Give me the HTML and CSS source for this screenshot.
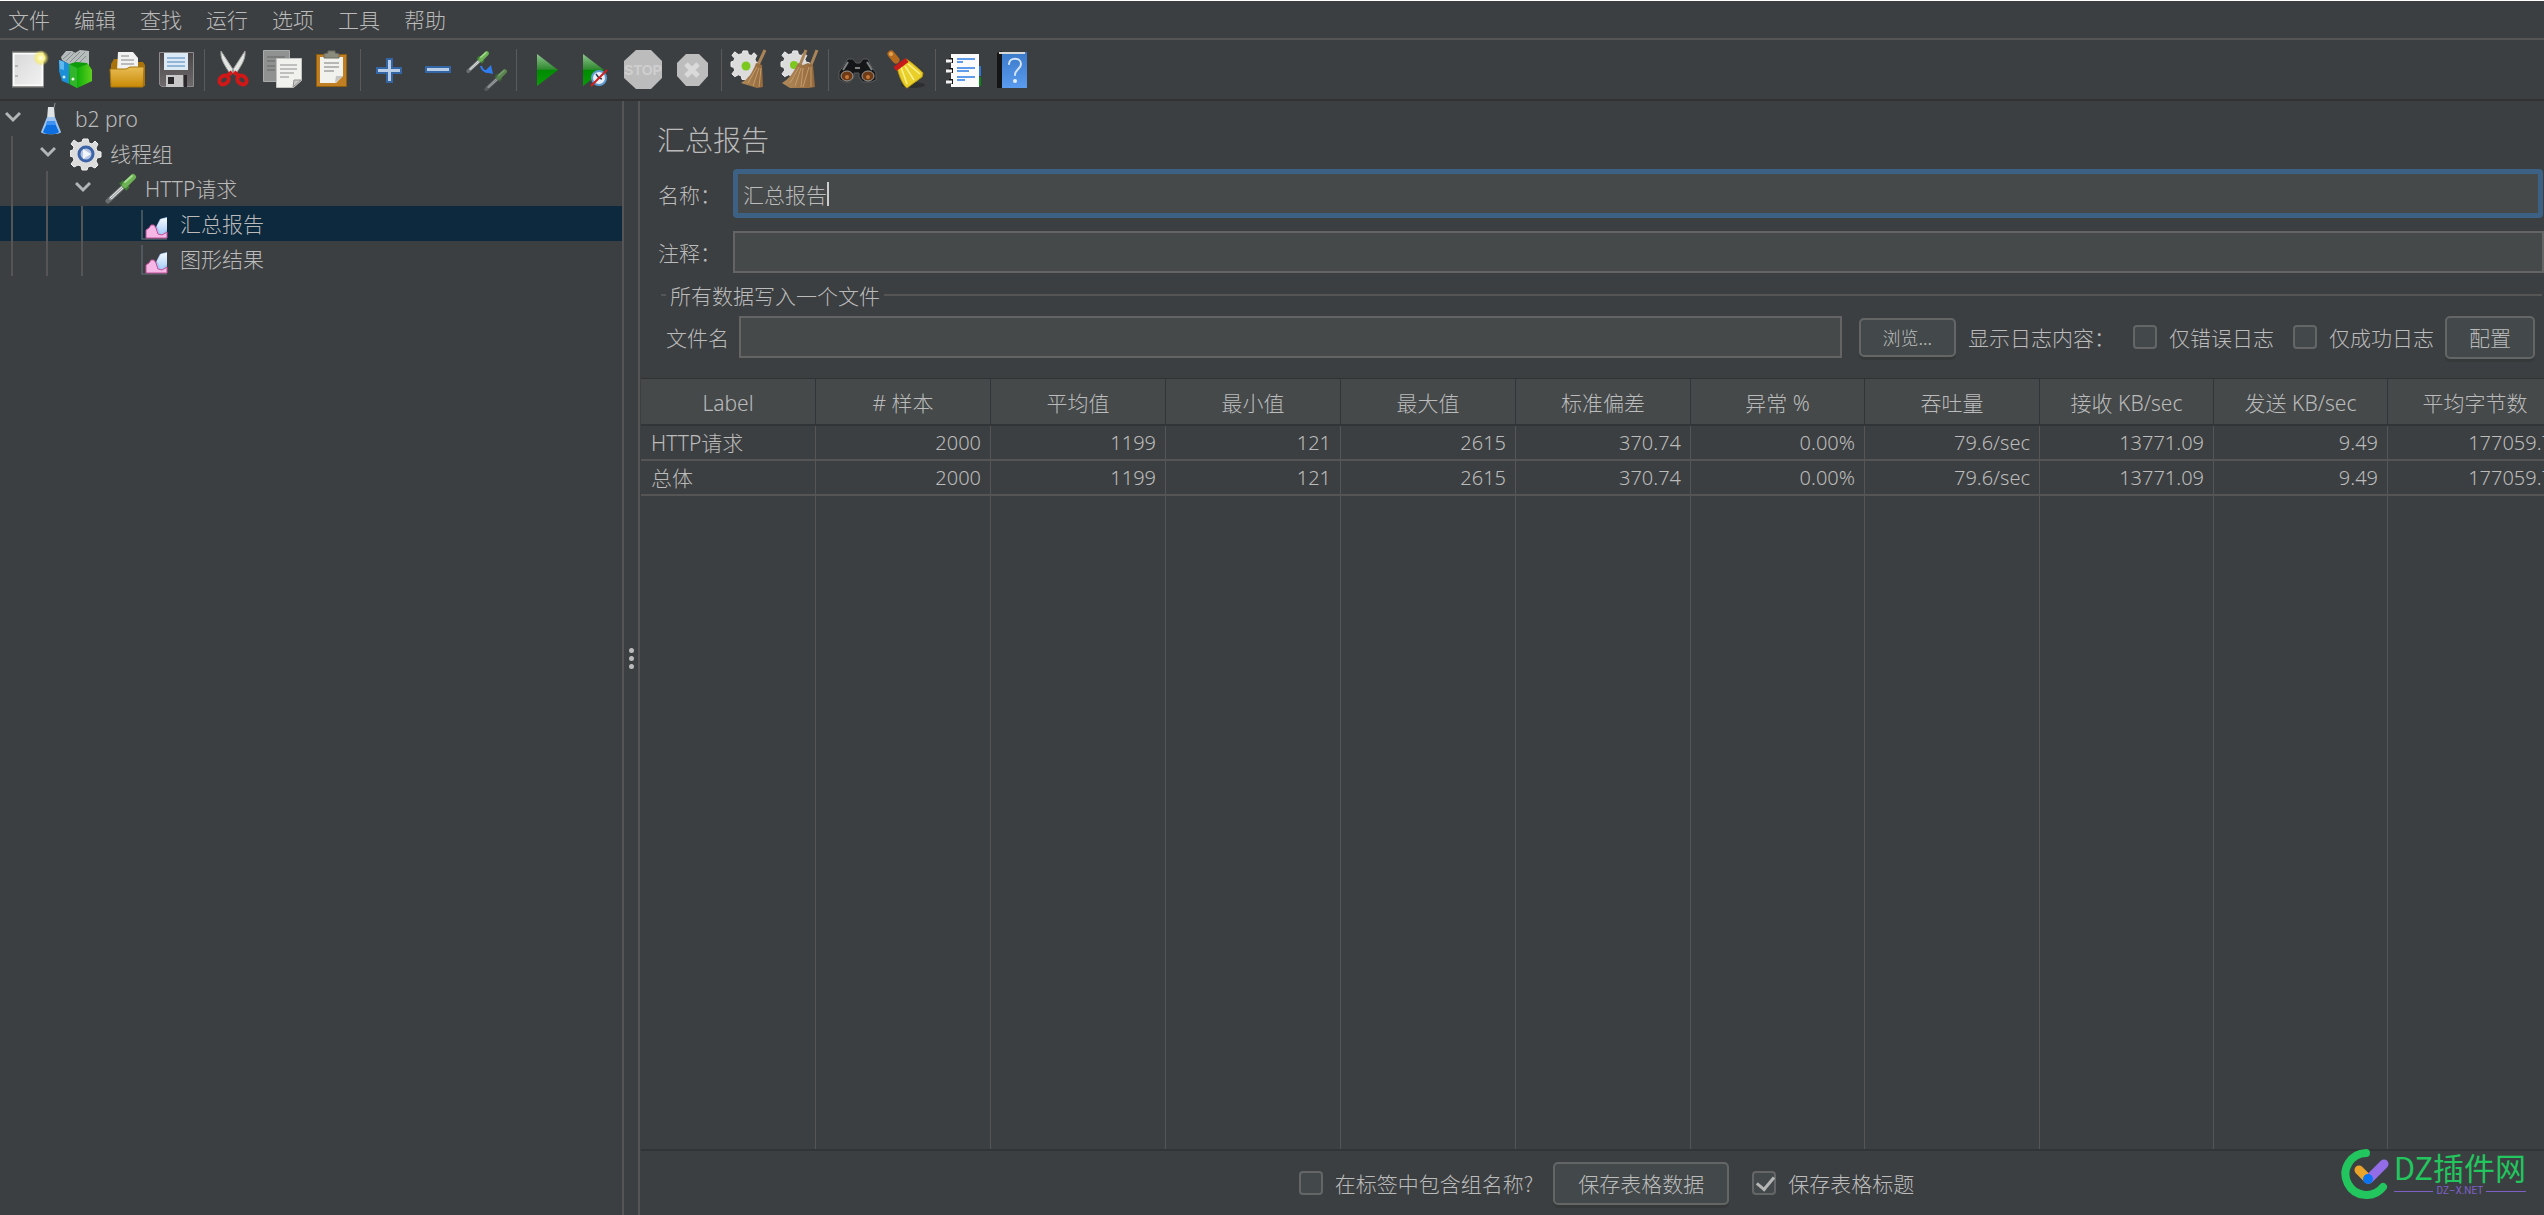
FILE: index.html
```html
<!DOCTYPE html>
<html lang="zh-CN">
<head>
<meta charset="utf-8">
<title>b2 pro</title>
<link rel="stylesheet" href="styles.css">
</head>
<body>
<svg class="defs" aria-hidden="true">
  <defs>
    <linearGradient id="gPage" x1="0" y1="0" x2="1" y2="1"><stop offset="0" stop-color="#d8d8d8"/><stop offset="1" stop-color="#f2f2f2"/></linearGradient>
    <linearGradient id="gFolder" x1="0" y1="0" x2="0" y2="1"><stop offset="0" stop-color="#e8bd55"/><stop offset="1" stop-color="#c98a06"/></linearGradient>
    <linearGradient id="gGreen" x1="0" y1="0" x2="0" y2="1"><stop offset="0" stop-color="#8fc48f"/><stop offset=".48" stop-color="#2f8a2f"/><stop offset=".5" stop-color="#008a00"/><stop offset="1" stop-color="#0a9c0a"/></linearGradient>
    <linearGradient id="gBook" x1="0" y1="0" x2="1" y2="0"><stop offset="0" stop-color="#0fae0a"/><stop offset="1" stop-color="#5fcf1e"/></linearGradient>
    <linearGradient id="gDisk" x1="0" y1="0" x2="0" y2="1"><stop offset="0" stop-color="#4a4648"/><stop offset="1" stop-color="#6e6a6c"/></linearGradient>
    <linearGradient id="gStraw" x1="0" y1="0" x2="1" y2="0"><stop offset="0" stop-color="#b08a5c"/><stop offset="1" stop-color="#94683a"/></linearGradient>
    <radialGradient id="gSun"><stop offset="0" stop-color="#fffef0"/><stop offset=".45" stop-color="#fbf38c"/><stop offset="1" stop-color="#f0e03c" stop-opacity="0"/></radialGradient>
    <linearGradient id="gHelp" x1="0" y1="0" x2="0" y2="1"><stop offset="0" stop-color="#3b78c8"/><stop offset="1" stop-color="#5a9cf0"/></linearGradient>
    <linearGradient id="gSky" x1="0" y1="0" x2="0" y2="1"><stop offset="0" stop-color="#f4f9ff"/><stop offset="1" stop-color="#a9cdf8"/></linearGradient>
    <g id="gear">
      <path fill="#dcdcdc" stroke="#f2f2f2" stroke-width="1" d="M13 1h5l1 4 3 1 3-3 3 3-2 4 1 3 4 1v5l-4 1-1 3 2 4-3 3-4-2-3 1-1 3h-5l-1-4-3-1-4 2-3-3 3-4-1-3-3-1v-5l3-1 1-3-3-3 3-4 4 3 4-1z"/>
    </g>
    <g id="dropper">
      <path fill="none" stroke="#6a6d6f" stroke-width="5" stroke-linecap="round" d="M3 30 19 15"/>
      <path fill="none" stroke="#e4e6e6" stroke-width="3" stroke-linecap="round" d="M6 27 19 15"/>
      <path fill="none" stroke="#8b9090" stroke-width="1" d="M4 29 19 15"/>
      <path fill="none" stroke="#3f7a34" stroke-width="5" d="m16 11 7 7"/>
      <path fill="none" stroke="#6db356" stroke-width="6" stroke-linecap="round" d="m20 14 8-8"/>
      <path fill="none" stroke="#a5dc90" stroke-width="2" stroke-linecap="round" d="m20 11 7-6"/>
    </g>
    <g id="chart">
      <path fill="none" stroke="#56616a" stroke-width="1.500" d="M2 0v29h25"/>
      <path fill="#a9c8f5" d="M16 17 20 9l7-2v20h-9z"/>
      <path fill="url(#gSky)" d="M17 16 21 9l6-1v11l-6 5z"/>
      <path fill="#f6b6e6" stroke="#c05096" stroke-width="1" d="M6 28v-8l3-2 2-3h3l2 3 2 6 4 1 5-3v6z"/>
    </g>
    <path id="arrow" fill="none" stroke="#b3b6b7" stroke-width="3" d="m1 3 7 7 7-7"/>
  </defs>
</svg>

<nav class="menubar">
  <button>文件</button><button>编辑</button><button>查找</button><button>运行</button><button>选项</button><button>工具</button><button>帮助</button>
</nav>

<div class="toolbar">
  <button aria-label="新建"><svg viewBox="0 0 40 40"><path fill="url(#gPage)" stroke="#fbfbfb" stroke-width="2" d="M4.500 4.500h29v32h-29z"/><path stroke="#8d8d86" fill="none" d="M3 3h31M3 38h32M6 17h3M6 27h3"/><circle cx="32" cy="9" r="8" fill="url(#gSun)"/></svg></button>
  <button aria-label="模板"><svg viewBox="0 0 40 40"><path fill="#b7bcbd" d="M3 8 8 2l6 0 3 2 5-3 9 1v14l-14 3-13-8z"/><path stroke="#848b8d" fill="none" d="m5 10 8-7m-5 9 9-9m-5 10 10-10m-6 11 11-11m-6 11 7-7"/><path fill="#1c8fd8" d="m1 11 4 1 6 3 3 21-10-4-3-10z"/><path fill="#5db8ee" d="m1 11 5 2v8l-4-1z"/><path fill="#0f9a0c" d="m11 15 7-2 11 1 5 7v11l-15 7-8-4z"/><path fill="url(#gBook)" d="m19 19 11-4 4 6v11l-15 7z"/><path fill="#32b42c" d="m11 15 8 4v20l-7-4z"/><circle cx="6" cy="28" r="1.500" fill="#c8ecff"/><circle cx="15" cy="30" r="1.500" fill="#e8ffe4"/></svg></button>
  <button aria-label="打开"><svg viewBox="0 0 40 40"><path fill="#a8730a" d="M4 15l3-5h9l2 3h18l2 3v21H4z"/><path fill="#f1f1f1" d="M11 3h15l5 6v13H10z"/><path stroke="#a9a9a9" fill="none" stroke-width="1.500" d="M14 7h8m-8 4h13m-13 4h13"/><path fill="url(#gFolder)" stroke="#a8760c" d="M3 20h16l4-2h14l-1 20H4z"/></svg></button>
  <button aria-label="保存"><svg viewBox="0 0 40 40"><path fill="url(#gDisk)" stroke="#8f8c8e" d="M3.500 3.500h34v34h-32l-2-2z"/><path fill="#dceaf6" d="M8 4h24v17H8z"/><path stroke="#7da4cc" fill="none" stroke-width="1.500" d="M11 9h18m-18 4h18m-18 4h18"/><path fill="#c9c9c9" d="M10 26h17v12H10z"/><path fill="#2a282a" d="M12 28h6v7h-6zM28 26h3v12h-3z"/></svg></button>
  <span class="sep"></span>
  <button aria-label="剪切"><svg viewBox="0 0 40 40"><path fill="#e3e5e3" stroke="#9fa29f" d="m7 2 13 20-3 4C12 18 6 11 7 2zM31 2 18 22l3 4C26 18 32 11 31 2z"/><ellipse cx="10" cy="31" rx="5" ry="4" fill="none" stroke="#d01818" stroke-width="4" transform="rotate(-40 10 31)"/><ellipse cx="28" cy="31" rx="5" ry="4" fill="none" stroke="#d01818" stroke-width="4" transform="rotate(40 28 31)"/><path stroke="#d01818" stroke-width="4" d="m13 27 5-4m7 4-5-4"/></svg></button>
  <button aria-label="复制"><svg viewBox="0 0 40 40"><path fill="#909292" stroke="#a9abab" d="M.5 1.500h26v31H.5z"/><path stroke="#737575" stroke-width="1.500" fill="none" d="M4 8h18M4 12h8m-8 5h8m-8 4h8"/><path fill="#f1f1ee" stroke="#c2c2bf" d="M13.500 9.500h25v22l-8 7h-17z"/><path stroke="#aeb0ae" stroke-width="1.500" fill="none" d="M17 16h17m-17 4h17m-17 4h14m-14 4h9"/><path fill="#c9cac7" stroke="#8f908e" d="m30 38 1-7 7 0z"/></svg></button>
  <button aria-label="粘贴"><svg viewBox="0 0 40 40"><path fill="#c07f22" stroke="#8f5c0e" d="M4.500 5.500h30v32h-30z"/><path fill="#f1f1ee" d="M8 8h23v19l-7 7H8z"/><path fill="#8b8c7c" stroke="#6c6d60" d="M12 9V5l4-1V2h7v2l4 1v4z"/><path stroke="#a2a4a2" stroke-width="1.500" fill="none" d="M12 14h15m-15 4h15m-15 4h10"/><path fill="#c4c5c2" d="m23 34 1-7h7z"/></svg></button>
  <span class="sep"></span>
  <button aria-label="展开"><svg viewBox="0 0 40 40"><path fill="#b9cde6" stroke="#3465a4" stroke-width="2" d="M17 10h5v9h9v5h-9v9h-5v-9H7v-5h10z"/></svg></button>
  <button aria-label="折叠"><svg viewBox="0 0 40 40"><path fill="#b9cde6" stroke="#3465a4" stroke-width="2" d="M7 18h24v5H7z"/></svg></button>
  <button aria-label="切换"><svg viewBox="0 0 40 40"><g transform="translate(-2 0) scale(.74)"><use href="#dropper"/></g><g transform="translate(16 18) scale(.74)" opacity=".6"><use href="#dropper"/></g><path fill="none" stroke="#2f7cf0" stroke-width="2" d="M13 17c1 5 5 6 9 6"/><path fill="#2f7cf0" d="m23 16 2 9-9-2z"/></svg></button>
  <span class="sep"></span>
  <button aria-label="启动"><svg viewBox="0 0 40 40"><path fill="url(#gGreen)" d="m11 5 21 16-21 16z"/></svg></button>
  <button aria-label="不停顿开始"><svg viewBox="0 0 40 40"><path fill="url(#gGreen)" d="m8 5 21 16L8 37z"/><circle cx="24" cy="29" r="7" fill="#e8f1fa" stroke="#5f9bd0" stroke-width="2"/><path stroke="#2c3c50" stroke-width="1.500" d="m24 29-3-4m3 4 3 1"/><path stroke="#cf1f1f" stroke-width="2" d="m16 37 16-16"/></svg></button>
  <button aria-label="停止" disabled><svg viewBox="0 0 40 40"><path fill="#bcbcbc" d="M12 1h15l11 11v17L27 40H12L0 29V12z"/><text x="19" y="26" class="stop-text">STOP</text></svg></button>
  <button aria-label="关闭" disabled><svg viewBox="0 0 40 40"><path fill="#bdbdbd" d="M13 5h13l9 9v13l-9 10H13l-9-10V14z"/><path stroke="#dadada" stroke-width="5" d="m13 15 12 12m0-12L13 27"/></svg></button>
  <span class="sep"></span>
  <button aria-label="清除"><svg viewBox="0 0 40 40"><g transform="translate(0 1) scale(.92)"><use href="#gear"/></g><circle cx="15" cy="17" r="4.500" fill="#7cc820"/><path stroke="#a98459" stroke-width="3" d="M34 1 27 16"/><path fill="url(#gStraw)" d="m25 14 6 2 1 22-6 1-16-5c7-4 12-11 15-20z"/><path stroke="#c39c6c" fill="none" d="m26 18-9 16m11-15-6 18m8-18-2 19"/></svg></button>
  <button aria-label="清除全部"><svg viewBox="0 0 40 40"><g transform="translate(1 1) scale(.92)"><use href="#gear"/></g><circle cx="14" cy="16" r="4" fill="#7cc820"/><path stroke="#a98459" stroke-width="3" d="m26 1-6 15M37 1l-6 15"/><path fill="url(#gStraw)" d="m18 14 5 2 5-2 5 2 2 22-6 1H10l-8-5c7-4 12-11 16-20z"/><path stroke="#c39c6c" fill="none" d="m19 18-9 16m11-15-6 18m8-18-2 19m8-20-6 20m8-20v20"/></svg></button>
  <span class="sep"></span>
  <button aria-label="查找"><svg viewBox="0 0 40 40"><path fill="#151617" stroke="#56595a" d="M10 10h5l3 4h4l3-4h5l3 7 5 7v7l-5 2h-8l-4-5v-4h-5v4l-4 5H6l-5-3v-7l5-7z"/><ellipse cx="9" cy="27" rx="6" ry="5" fill="#6e3a16" stroke="#9a9a9a"/><ellipse cx="30" cy="27" rx="6" ry="5" fill="#6e3a16" stroke="#9a9a9a"/><path stroke="#7e8182" stroke-width="2" fill="none" d="m10 13-5 8m24-8 5 8M17 19h5"/><circle cx="9" cy="28" r="2" fill="#c47838"/><circle cx="30" cy="28" r="2" fill="#c47838"/></svg></button>
  <button aria-label="重置查找"><svg viewBox="0 0 40 40"><ellipse cx="26" cy="36" rx="12" ry="3" fill="#2c2e2f"/><path fill="#e9cf2a" stroke="#b99a10" d="m10 17 9-7c5 3 11 8 17 14l-1 4-15 11c-3-1-9-13-10-22z"/><path stroke="#fbf08a" fill="none" stroke-width="1.500" d="m14 18 6 17m-2-18 9 14m-6-16 12 10"/><path stroke="#c71a1a" stroke-width="5" d="m8 20 12-9"/><path stroke="#b56a1e" stroke-width="7" stroke-linecap="round" d="m4 5 5 6"/><circle cx="4" cy="5" r="2" fill="#e2a455"/></svg></button>
  <span class="sep"></span>
  <button aria-label="函数助手"><svg viewBox="0 0 40 40"><path fill="#2c77d8" d="M33 17h3v10h-3z"/><path fill="#0a8a18" d="M33 28h3v9h-3z"/><path fill="#fbfbfb" d="M6 5h28v33H6z"/><path stroke="#2f7ce8" stroke-width="1.500" d="M12 10h18m-18 3h6m-6 6h18m-18 3h12m-12 6h18m-18 3h8"/><path stroke="#161616" stroke-width="4" d="M6 9v5m0 5v5m0 6v5"/><path stroke="#f4f4f4" stroke-width="3" d="M1 12h6M1 22h6M1 33h6"/></svg></button>
  <button aria-label="帮助"><svg viewBox="0 0 40 40"><path fill="#151515" d="M3 4l5-2v37H3z"/><path fill="url(#gHelp)" d="M8 3h25v36H8z"/><path stroke="#d8d8d8" stroke-width="2" d="M5 4h26"/><path fill="none" stroke="#d5e5fa" stroke-width="2" stroke-linecap="round" d="M15 15c0-7 12-7 12 0 0 5-6 5-6 11"/><circle cx="21" cy="32" r="2" fill="#e6f0fc"/></svg></button>
</div>

<main class="workspace">
  <aside class="tree">
    <ul>
      <li class="node d0"><svg class="chev" viewBox="0 0 16 14"><use href="#arrow"/></svg><svg class="ico" viewBox="0 0 32 35"><path fill="#dfe3e4" d="M13 6h6l1 12h-8z"/><path stroke="#8b9092" d="m20 2-1 5"/><path fill="#9dc4f0" d="m12 16-6 15c0 3 20 3 20 0l-6-15z"/><path fill="#0d6fe0" d="m12 22-4 9c2 3 14 3 16 0l-4-9z"/><path fill="#3d92f4" d="M12 20h8l1 4H11z"/></svg><span>b2 pro</span></li>
      <li class="node d1"><svg class="chev" viewBox="0 0 16 14"><use href="#arrow"/></svg><svg class="ico" viewBox="0 0 32 35"><g transform="translate(0 2)"><use href="#gear"/></g><circle cx="16" cy="18" r="7" fill="#b4c6e4" stroke="#3c62a8" stroke-width="3"/><path fill="#f2f5fa" d="m13 13 8 5-8 5z"/></svg><span>线程组</span></li>
      <li class="node d2"><svg class="chev" viewBox="0 0 16 14"><use href="#arrow"/></svg><svg class="ico" viewBox="0 0 32 35"><use href="#dropper"/></svg><span>HTTP请求</span></li>
      <li class="node d3 selected"><svg class="ico" viewBox="0 0 32 35"><g transform="translate(0 4)"><use href="#chart"/></g></svg><span>汇总报告</span></li>
      <li class="node d3"><svg class="ico" viewBox="0 0 32 35"><g transform="translate(0 4)"><use href="#chart"/></g></svg><span>图形结果</span></li>
    </ul>
  </aside>
  <div class="splitter"><i></i><i></i><i></i></div>

  <section class="panel">
    <h1>汇总报告</h1>
    <div class="field name-field">
      <label for="name">名称：</label>
      <div class="text-wrap"><input id="name" type="text" value="汇总报告"><span class="caret"></span></div>
    </div>
    <div class="field comment-field">
      <label for="comment">注释：</label>
      <input id="comment" type="text">
    </div>
    <fieldset>
      <legend>所有数据写入一个文件</legend>
      <div class="file-row">
        <label for="file">文件名</label>
        <input id="file" type="text">
        <button class="btn browse">浏览...</button>
        <span class="log-label">显示日志内容：</span>
        <label class="check"><input type="checkbox">仅错误日志</label>
        <label class="check"><input type="checkbox">仅成功日志</label>
        <button class="btn">配置</button>
      </div>
    </fieldset>

    <div class="table-area">
      <table>
        <colgroup><col span="6"><col class="narrow"><col><col class="narrow"><col class="narrow"><col></colgroup>
        <thead>
          <tr><th>Label</th><th># 样本</th><th>平均值</th><th>最小值</th><th>最大值</th><th>标准偏差</th><th>异常 %</th><th>吞吐量</th><th>接收 KB/sec</th><th>发送 KB/sec</th><th>平均字节数</th></tr>
        </thead>
        <tbody>
          <tr><td>HTTP请求</td><td>2000</td><td>1199</td><td>121</td><td>2615</td><td>370.74</td><td>0.00%</td><td>79.6/sec</td><td>13771.09</td><td>9.49</td><td>177059.7</td></tr>
          <tr><td>总体</td><td>2000</td><td>1199</td><td>121</td><td>2615</td><td>370.74</td><td>0.00%</td><td>79.6/sec</td><td>13771.09</td><td>9.49</td><td>177059.7</td></tr>
          <tr class="rest"><td></td><td></td><td></td><td></td><td></td><td></td><td></td><td></td><td></td><td></td><td></td></tr>
        </tbody>
      </table>
    </div>

    <footer>
      <label class="check"><input type="checkbox">在标签中包含组名称?</label>
      <button class="btn save">保存表格数据</button>
      <label class="check"><input type="checkbox" checked>保存表格标题</label>
    </footer>
  </section>
</main>

<div class="brand">
  <svg viewBox="0 0 48 50"><path fill="none" stroke="#22c55e" stroke-width="8" stroke-linecap="round" d="M25 4A21 21 0 1 0 42 38"/><path stroke="#eba42a" stroke-width="9" stroke-linecap="round" d="m18 21 9 9"/><path stroke="#936de8" stroke-width="9" stroke-linecap="round" d="M43 15 28 30"/><circle cx="27" cy="30" r="5" fill="#0a74f0"/></svg>
  <div class="brand-text"><b>DZ插件网</b><small>DZ–X.NET</small></div>
</div>
</body>
</html>
```
FILE: styles.css
```css
* { box-sizing: border-box; }

body {
  margin: 0;
  height: 100vh;
  display: flex;
  flex-direction: column;
  overflow: hidden;
  background: #3c3f41;
  border-top: 1px solid #fff;
  color: #bbb;
  font: 300 21px/28px "Noto Sans CJK SC", sans-serif;
}

button, input { font: inherit; color: inherit; }
.defs { position: absolute; width: 0; height: 0; }

.menubar {
  display: flex;
  flex: none;
  height: 39px;
  padding-bottom: 2px;
  border-bottom: 2px solid #555;
}
.menubar button {
  padding: 0 12px;
  border: 0;
  background: none;
}
.menubar button:first-child { padding-left: 8px; }

.toolbar {
  display: flex;
  flex: none;
  height: 61px;
  padding: 0 4px 1px;
  border-bottom: 2px solid #323232;
}
.toolbar button {
  width: 49px;
  padding: 0;
  display: grid;
  place-items: center;
  border: 0;
  background: none;
}
.toolbar svg { width: 40px; height: 40px; overflow: visible; }
.sep { width: 1px; margin: 9px 4px 7px; background: #5a5a5a; }
.stop-text { font: 700 14px "Liberation Sans", sans-serif; fill: #cfcfcf; text-anchor: middle; }

.workspace { display: flex; flex: 1; min-height: 0; }

.tree {
  width: 622px;
  flex: none;
  font-family: "Noto Sans", "Noto Sans CJK SC", sans-serif;
}
.tree ul { margin: 0; padding: 0; list-style: none; }
.node {
  display: flex;
  align-items: center;
  height: 35px;
  background-image: linear-gradient(#555, #555), linear-gradient(#555, #555), linear-gradient(#555, #555);
  background-repeat: no-repeat;
  background-position: 11px 0, 46px 0, 81px 0;
  background-size: 0 0;
}
.chev { width: 16px; height: 14px; margin: 0 14px 4px 0; }
.ico { width: 32px; height: 35px; margin-right: 8px; }
.d0 { padding-left: 5px; }
.d1 { padding-left: 40px; background-size: 2px 100%, 0 0, 0 0; }
.d2 { padding-left: 75px; background-size: 2px 100%, 2px 100%, 0 0; }
.d3 { padding-left: 140px; background-size: 2px 100%; }
.selected { background-color: #0d293e; }

.splitter {
  flex: none;
  width: 18px;
  display: flex;
  flex-direction: column;
  align-items: center;
  justify-content: center;
  gap: 3px;
  border: solid #555;
  border-width: 0 2px;
}
.splitter i { width: 5px; height: 5px; border-radius: 3px; background: #bbb; }

.panel { flex: 1; min-width: 0; display: flex; flex-direction: column; }
h1 { margin: 18px 0 10px 17px; font-size: 28px; line-height: 40px; font-weight: 300; }

.field { display: flex; align-items: center; padding-left: 18px; }
.field label { width: 75px; }
input[type="text"] {
  flex: 1;
  min-width: 0;
  height: 42px;
  padding: 0 8px;
  border: 2px solid #646464;
  background: #45494a;
  outline: 0;
}
.name-field { padding-right: 1px; margin-bottom: 13px; }
.text-wrap { position: relative; display: flex; flex: 1; }
.text-wrap input[type="text"] {
  height: 49px;
  padding: 0 5px;
  border: 5px solid #3d6185;
  border-radius: 4px;
}
.caret { position: absolute; left: 94px; top: 13px; width: 2px; height: 24px; background: #ccc; }

fieldset {
  margin: 8px 2px 20px 21px;
  padding: 7px 0 0 5px;
  border: 0;
  border-top: 2px solid #555;
  min-width: 0;
}
legend { padding: 0 4px; }
.file-row { display: flex; align-items: center; height: 42px; padding-right: 7px; }
.file-row > label:first-child { margin-right: 10px; }

.btn {
  height: 43px;
  padding: 0 22px;
  border: 2px solid #646666;
  border-radius: 5px;
  background: #43494a;
  box-shadow: 0 3px 0 #36393a;
}
.browse { height: 39px; font-size: 18px; margin: 0 12px 0 17px; }

.check { display: flex; align-items: center; }
input[type="checkbox"] {
  appearance: none;
  width: 24px;
  height: 24px;
  margin: 0 12px 0 0;
  border: 2px solid #646666;
  border-radius: 4px;
  background: #43494a;
}
input[type="checkbox"]:checked::before {
  content: "";
  display: block;
  width: 8px;
  height: 14px;
  margin: 0 0 0 6px;
  border: solid #b5b5b5;
  border-width: 0 3px 3px 0;
  transform: rotate(40deg);
}
.file-row .check { margin-right: 19px; }
.file-row .check + .btn { margin-left: -8px; }
.log-label { margin-right: 18px; }

.table-area {
  flex: 1;
  min-height: 0;
  overflow: hidden;
  margin-left: 1px;
  border-top: 1px solid #323232;
  border-bottom: 2px solid #323537;
}
table {
  width: 1922px;
  height: 100%;
  table-layout: fixed;
  border-collapse: separate;
  border-spacing: 0;
  font-family: "Noto Sans", "Noto Sans CJK SC", sans-serif;
}
col { width: 175px; }
col.narrow { width: 174px; }
th {
  height: 47px;
  padding: 2px 0 0;
  border-right: 1px solid #323537;
  border-bottom: 2px solid #323537;
  background: #45494a;
  font-weight: 300;
}
td {
  height: 35px;
  padding: 0 9px 0 10px;
  border-right: 1px solid #555;
  border-bottom: 2px solid #555;
  text-align: right;
  font-size: 20px;
}
td:first-child { text-align: left; font-size: 21px; }
.rest td { height: auto; padding: 0; border-bottom: 0; }

footer {
  display: flex;
  align-items: center;
  justify-content: center;
  height: 64px;
  padding-left: 29px;
}
.save { padding: 0 23px; margin: 0 23px 0 20px; }

.brand {
  position: absolute;
  right: 18px;
  bottom: 16px;
  display: flex;
  gap: 5px;
}
.brand svg { width: 48px; height: 50px; }
.brand-text { display: flex; flex-direction: column; }
.brand b { font-size: 31px; line-height: 36px; font-weight: 400; color: #22c55e; }
.brand small {
  display: flex;
  align-items: center;
  gap: 3px;
  font: 10px/12px Roboto, sans-serif;
  color: #7d5fc5;
}
.brand small::before, .brand small::after { content: ""; flex: 1; height: 1px; background: #7d5fc5; }
```
